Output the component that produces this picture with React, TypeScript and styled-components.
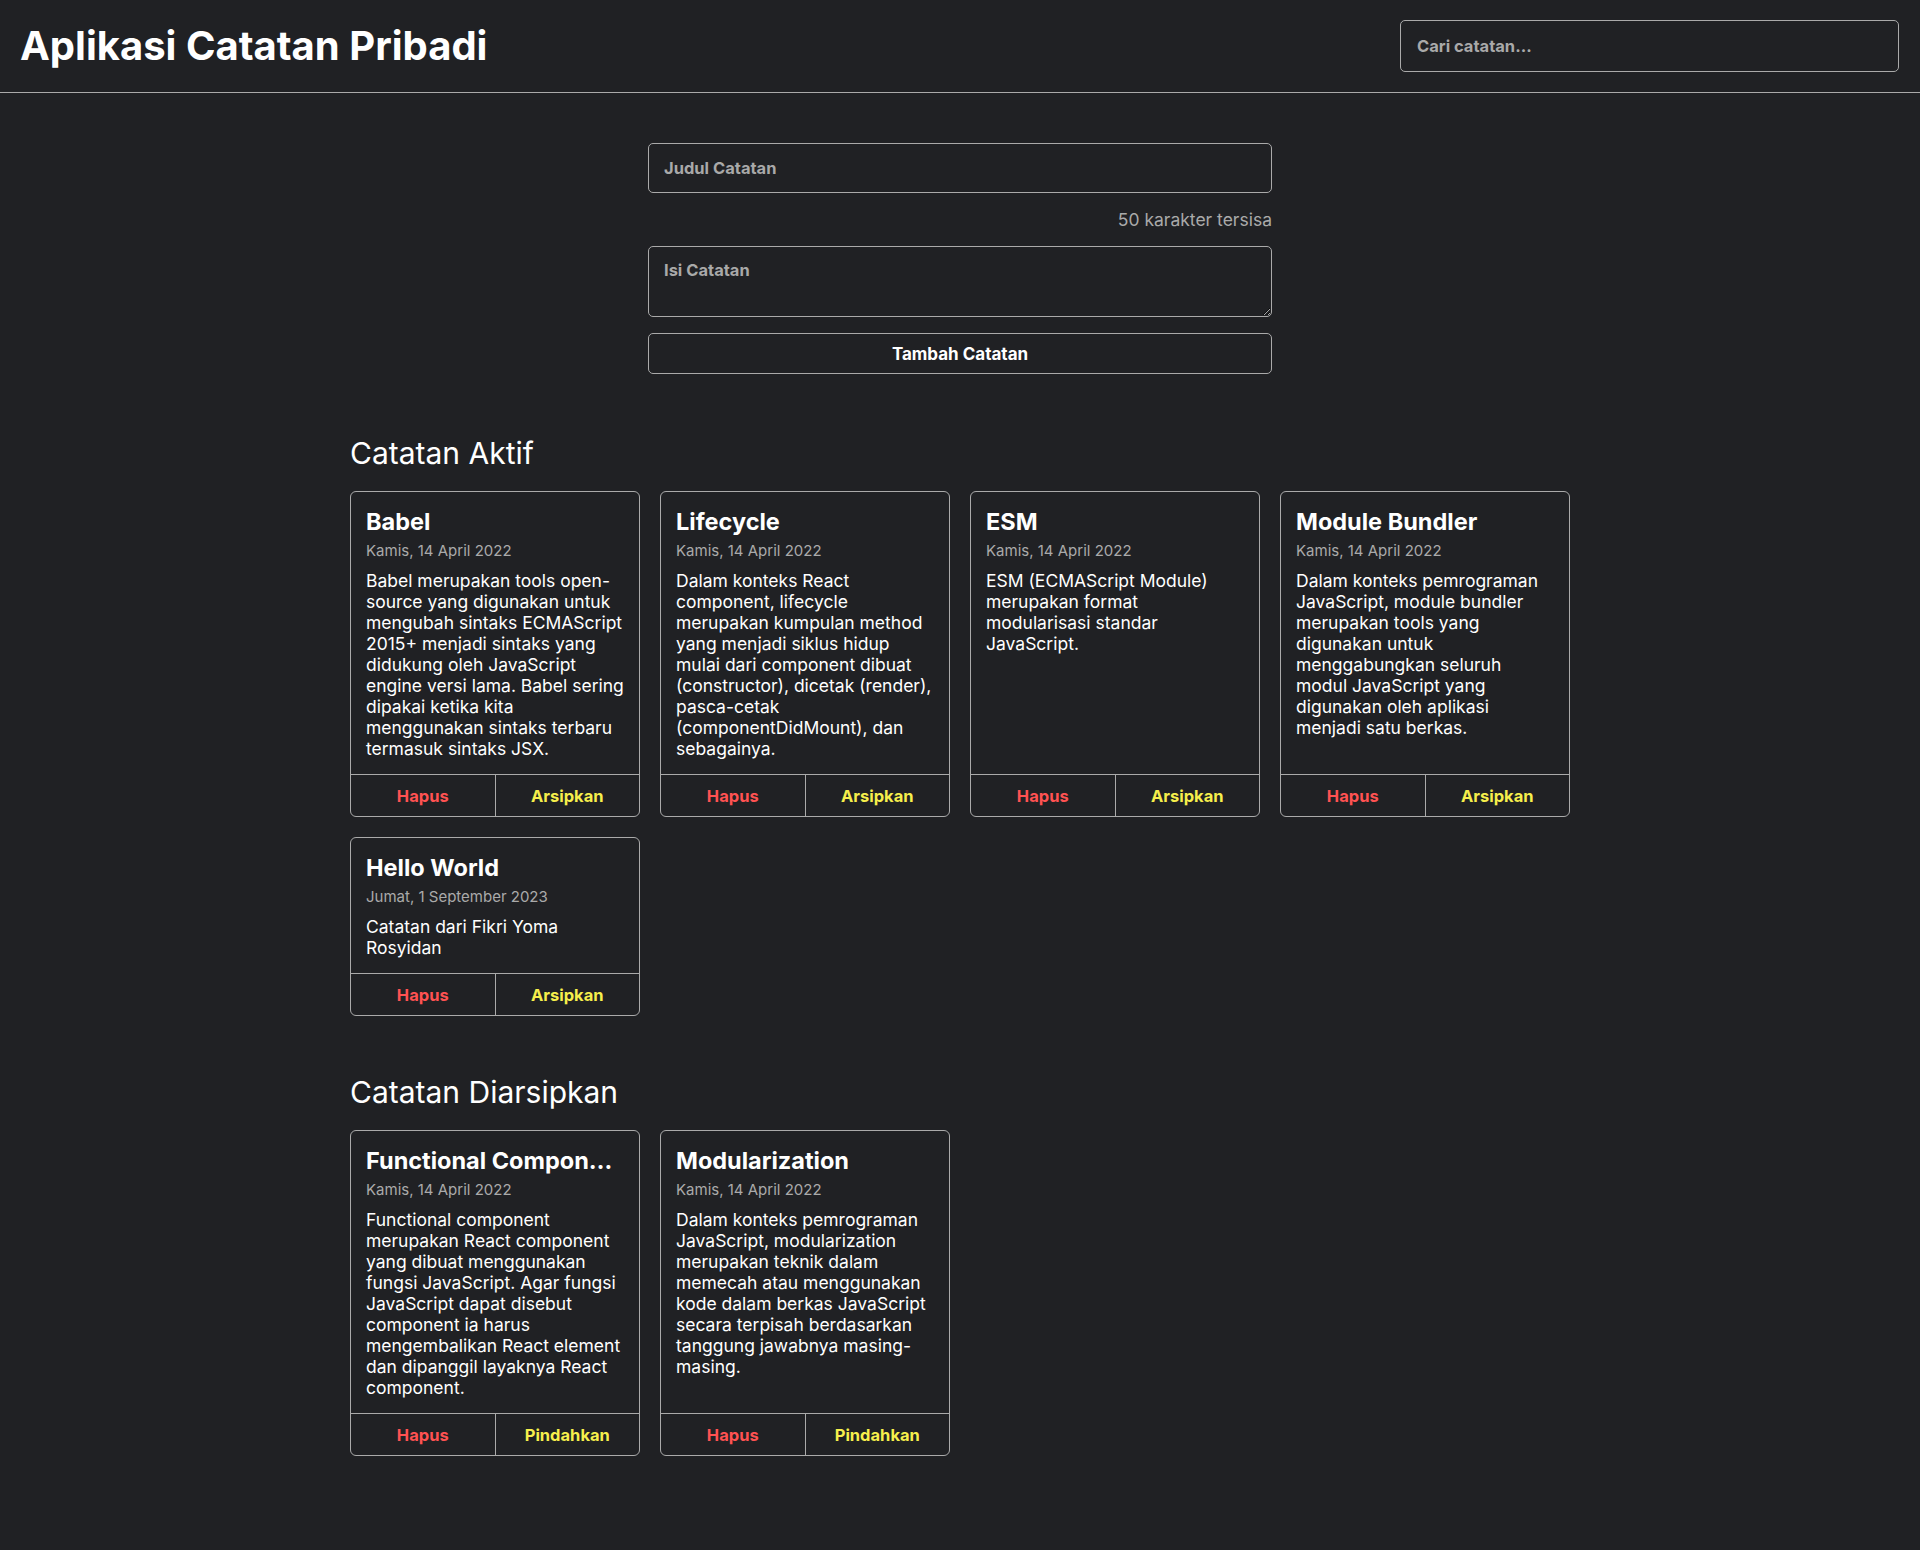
import React from "react";
import styled, { createGlobalStyle } from "styled-components";

const GlobalStyle = createGlobalStyle`
  * { box-sizing: border-box; }
  html, body { margin: 0; padding: 0; background: #202124; }
  body {
    color: #ffffff;
    font-family: Inter, "Noto Sans", sans-serif;
    min-height: 1550px;
  }
`;

const Header = styled.header`
  display: flex;
  justify-content: space-between;
  align-items: center;
  padding: 20px 21px 20px 20px;
  border-bottom: 1px solid #aaaaaa;
`;

const AppTitle = styled.h1`
  margin: 0;
  font-size: 40px;
  font-weight: 700;
  line-height: 48px;
  color: #ffffff;
`;

const SearchInput = styled.input`
  width: 499px;
  height: 52px;
  padding: 0 16px;
  background: transparent;
  border: 1px solid #aaaaaa;
  border-radius: 5px;
  color: #ffffff;
  font-family: Inter, sans-serif;
  font-size: 16.5px;
  font-weight: 700;
  outline: none;
  &::placeholder { color: #a9a9a9; }
`;

const Main = styled.main`
  max-width: 1220px;
  margin: 0 auto;
  padding: 50px 0 80px;
`;

const Form = styled.form`
  width: 624px;
  margin: 0 auto;
  display: flex;
  flex-direction: column;
`;

const TitleInput = styled.input`
  height: 50px;
  padding: 0 15px;
  background: transparent;
  border: 1px solid #aaaaaa;
  border-radius: 5px;
  color: #ffffff;
  font-family: Inter, sans-serif;
  font-size: 16.5px;
  font-weight: 700;
  outline: none;
  &::placeholder { color: #a9a9a9; }
`;

const CharLimit = styled.p`
  margin: 16px 0;
  text-align: right;
  font-size: 17.5px;
  line-height: 21px;
  color: #aaaaaa;
`;

const BodyInput = styled.textarea`
  height: 71px;
  padding: 13px 15px;
  background: transparent;
  border: 1px solid #aaaaaa;
  border-radius: 5px;
  color: #ffffff;
  font-family: Inter, sans-serif;
  font-size: 16.5px;
  font-weight: 700;
  outline: none;
  &::placeholder { color: #a9a9a9; }
`;

const SubmitButton = styled.button`
  margin-top: 16px;
  height: 41px;
  background: transparent;
  border: 1px solid #aaaaaa;
  border-radius: 5px;
  color: #ffffff;
  font-family: Inter, sans-serif;
  font-size: 17px;
  font-weight: 700;
  cursor: pointer;
`;

const SectionTitle = styled.h2<{ $first?: boolean }>`
  margin: ${(p) => (p.$first ? "61px" : "58px")} 0 20px;
  font-size: 30px;
  font-weight: 400;
  line-height: 36px;
`;

const NotesGrid = styled.div`
  display: grid;
  grid-template-columns: repeat(auto-fill, minmax(250px, 1fr));
  gap: 20px;
`;

const Card = styled.article`
  display: flex;
  flex-direction: column;
  border: 1px solid #aaaaaa;
  border-radius: 6px;
  overflow: hidden;
`;

const CardContent = styled.div`
  flex: 1;
  padding: 16px 15px 15px;
`;

const CardTitle = styled.h3`
  margin: 0;
  font-size: 23.5px;
  font-weight: 700;
  line-height: 28px;
  white-space: nowrap;
  overflow: hidden;
  text-overflow: ellipsis;
`;

const CardDate = styled.p`
  margin: 6px 0 10px;
  font-size: 15px;
  line-height: 18px;
  color: #aaaaaa;
`;

const CardBody = styled.p`
  margin: 0;
  font-size: 17.5px;
  line-height: 21px;
`;

const CardActions = styled.div`
  display: flex;
  border-top: 1px solid #aaaaaa;
`;

const ActionButton = styled.button<{ $variant: "delete" | "archive" }>`
  flex: 1;
  height: 41px;
  background: transparent;
  border: 0;
  border-right: ${(p) => (p.$variant === "delete" ? "1px solid #aaaaaa" : "0")};
  color: ${(p) => (p.$variant === "delete" ? "#ff5252" : "#f6ef4c")};
  font-family: Inter, sans-serif;
  font-size: 16.5px;
  font-weight: 700;
  cursor: pointer;
`;

type Note = { title: string; date: string; body: string };

const activeNotes: Note[] = [
  {
    title: "Babel",
    date: "Kamis, 14 April 2022",
    body: "Babel merupakan tools open-source yang digunakan untuk mengubah sintaks ECMAScript 2015+ menjadi sintaks yang didukung oleh JavaScript engine versi lama. Babel sering dipakai ketika kita menggunakan sintaks terbaru termasuk sintaks JSX.",
  },
  {
    title: "Lifecycle",
    date: "Kamis, 14 April 2022",
    body: "Dalam konteks React component, lifecycle merupakan kumpulan method yang menjadi siklus hidup mulai dari component dibuat (constructor), dicetak (render), pasca-cetak (componentDidMount), dan sebagainya.",
  },
  {
    title: "ESM",
    date: "Kamis, 14 April 2022",
    body: "ESM (ECMAScript Module) merupakan format modularisasi standar JavaScript.",
  },
  {
    title: "Module Bundler",
    date: "Kamis, 14 April 2022",
    body: "Dalam konteks pemrograman JavaScript, module bundler merupakan tools yang digunakan untuk menggabungkan seluruh modul JavaScript yang digunakan oleh aplikasi menjadi satu berkas.",
  },
  {
    title: "Hello World",
    date: "Jumat, 1 September 2023",
    body: "Catatan dari Fikri Yoma Rosyidan",
  },
];

const archivedNotes: Note[] = [
  {
    title: "Functional Component",
    date: "Kamis, 14 April 2022",
    body: "Functional component merupakan React component yang dibuat menggunakan fungsi JavaScript. Agar fungsi JavaScript dapat disebut component ia harus mengembalikan React element dan dipanggil layaknya React component.",
  },
  {
    title: "Modularization",
    date: "Kamis, 14 April 2022",
    body: "Dalam konteks pemrograman JavaScript, modularization merupakan teknik dalam memecah atau menggunakan kode dalam berkas JavaScript secara terpisah berdasarkan tanggung jawabnya masing-masing.",
  },
];

function NoteCard({ note, archived }: { note: Note; archived?: boolean }) {
  return (
    <Card>
      <CardContent>
        <CardTitle title={note.title}>{note.title}</CardTitle>
        <CardDate>{note.date}</CardDate>
        <CardBody>{note.body}</CardBody>
      </CardContent>
      <CardActions>
        <ActionButton $variant="delete">Hapus</ActionButton>
        <ActionButton $variant="archive">{archived ? "Pindahkan" : "Arsipkan"}</ActionButton>
      </CardActions>
    </Card>
  );
}

export default function App() {
  return (
    <>
      <GlobalStyle />
      <Header>
        <AppTitle>Aplikasi Catatan Pribadi</AppTitle>
        <SearchInput type="text" placeholder="Cari catatan..." />
      </Header>
      <Main>
        <Form onSubmit={(e) => e.preventDefault()}>
          <TitleInput type="text" placeholder="Judul Catatan" />
          <CharLimit>50 karakter tersisa</CharLimit>
          <BodyInput placeholder="Isi Catatan" />
          <SubmitButton type="submit">Tambah Catatan</SubmitButton>
        </Form>
        <SectionTitle $first>Catatan Aktif</SectionTitle>
        <NotesGrid>
          {activeNotes.map((n) => (
            <NoteCard key={n.title} note={n} />
          ))}
        </NotesGrid>
        <SectionTitle>Catatan Diarsipkan</SectionTitle>
        <NotesGrid>
          {archivedNotes.map((n) => (
            <NoteCard key={n.title} note={n} archived />
          ))}
        </NotesGrid>
      </Main>
    </>
  );
}
